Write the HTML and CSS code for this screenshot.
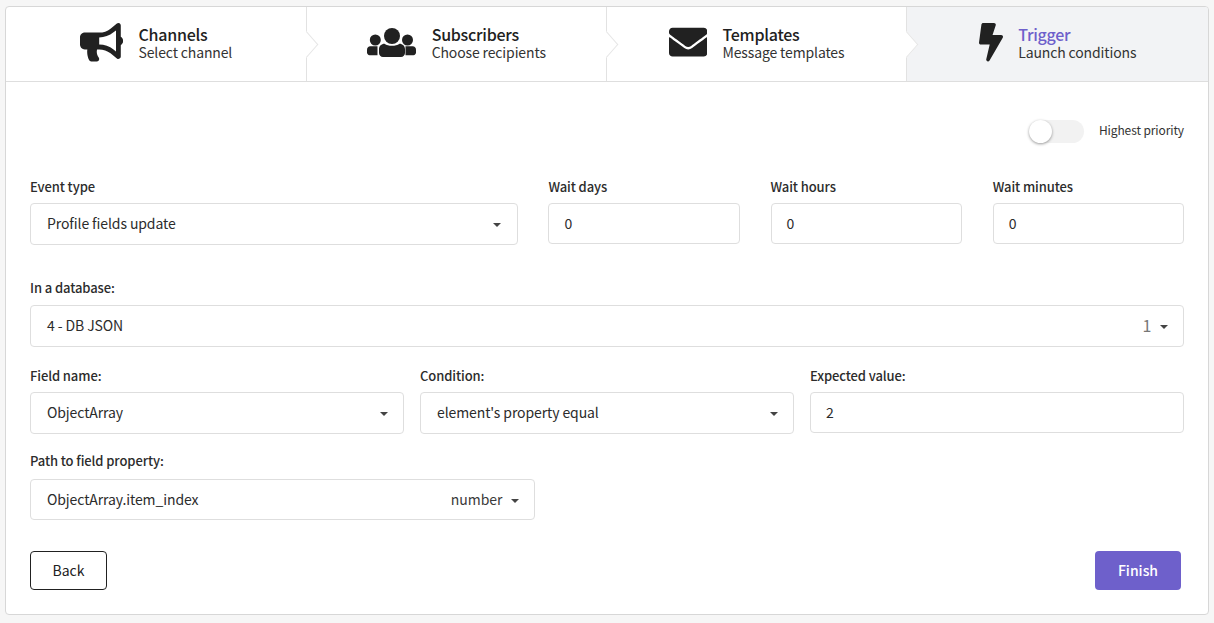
FILE: index.html
```html
<!DOCTYPE html>
<html lang="en">
<head>
<meta charset="utf-8">
<title>Trigger</title>
<link rel="stylesheet" href="styles.css">
</head>
<body>
<main class="card">
  <nav class="steps">
    <div class="step">
      <svg class="icon icon-bullhorn" viewBox="0 0 576 512"><path d="M576 240c0-23.630-12.950-44.040-32-55.120V32.010C544 23.260 537.020 0 512 0c-7.120 0-14.190 2.380-19.980 7.020l-85.030 68.030C364.280 109.190 310.660 128 256 128H64c-35.350 0-64 28.650-64 64v96c0 35.350 28.650 64 64 64h33.700c-1.390 10.480-2.180 21.140-2.180 32 0 39.770 9.260 77.350 25.560 110.940 5.190 10.690 16.520 17.060 28.400 17.060h74.280c26.050 0 41.690-29.840 25.900-50.560-16.400-21.520-26.150-48.360-26.150-77.440 0-11.110 1.620-21.790 4.410-32H256c54.660 0 108.280 18.810 150.980 52.950l85.030 68.030a32.023 32.023 0 0 0 19.980 7.020c24.920 0 32-22.780 32-32V295.130C563.050 284.040 576 263.630 576 240zm-96 141.420l-33.050-26.440C392.950 311.780 325.120 288 256 288v-96c69.120 0 136.950-23.780 190.950-66.980L480 98.580v282.840z"/></svg>
      <div class="step-text"><div class="step-title">Channels</div><div class="step-sub">Select channel</div></div>
    </div>
    <div class="step">
      <svg class="icon icon-users" viewBox="0 0 49 29"><circle cx="25" cy="8" r="8"/><circle cx="8.300" cy="12" r="5.500"/><circle cx="40.500" cy="12" r="5.500"/><path d="M12 25v-4c0-3 2.500-5.300 5.500-5.300 2 1.300 4.500 2.100 7.500 2.100s5.500-.8 7.500-2.100c3 0 5.500 2.300 5.500 5.300v4c0 2.200-1.800 4-4 4H16c-2.200 0-4-1.800-4-4z"/><path d="M0 21.500c0-1.800 1.500-3.300 3.300-3.300h7.200v9H2.500C1.100 27.200 0 26 0 24.600z"/><path d="M49 21.500c0-1.800-1.500-3.300-3.300-3.300h-7.200v9h8C47.900 27.200 49 26 49 24.600z"/></svg>
      <div class="step-text"><div class="step-title">Subscribers</div><div class="step-sub">Choose recipients</div></div>
    </div>
    <div class="step">
      <svg class="icon icon-envelope" viewBox="0 0 512 512"><path d="M502.300 190.800c3.900-3.100 9.700-.2 9.700 4.700V400c0 26.500-21.500 48-48 48H48c-26.500 0-48-21.500-48-48V195.600c0-5 5.700-7.800 9.700-4.700 22.400 17.400 52.100 39.500 154.100 113.600 21.100 15.400 56.700 47.800 92.200 47.600 35.700.3 72-32.800 92.300-47.600 102-74.100 131.600-96.300 154-113.700zM256 320c23.200.4 56.600-29.200 73.400-41.400 132.700-96.300 142.800-104.700 173.400-128.700 5.800-4.500 9.200-11.500 9.200-18.900v-19c0-26.500-21.500-48-48-48H48C21.500 64 0 85.500 0 112v19c0 7.400 3.400 14.300 9.200 18.900 30.600 23.900 40.700 32.400 173.400 128.700 16.800 12.200 50.200 41.800 73.400 41.400z"/></svg>
      <div class="step-text"><div class="step-title">Templates</div><div class="step-sub">Message templates</div></div>
    </div>
    <div class="step step-active">
      <svg class="icon icon-bolt" viewBox="0 0 320 512"><path d="M296 160H180.600l42.600-129.800C227.200 15 215.700 0 200 0H56C44 0 33.800 8.900 32.200 20.800l-32 240C-1.700 275.200 9.500 288 24 288h118.700L96.600 482.500c-3.600 15.200 8 29.500 23.300 29.500 8.400 0 16.400-4.400 20.800-12l176-304c9.300-15.900-2.200-36-20.700-36z"/></svg>
      <div class="step-text"><div class="step-title">Trigger</div><div class="step-sub">Launch conditions</div></div>
    </div>
  </nav>
  <form class="body">
    <div class="priority">
      <span class="toggle"><span class="knob"></span></span>
      <span class="priority-label">Highest priority</span>
    </div>
    <div class="grid grid-top">
      <div class="field"><div class="label">Event type</div><div class="control"><span class="value">Profile fields update</span><span class="caret"></span></div></div>
      <div class="field"><div class="label">Wait days</div><div class="control input">0</div></div>
      <div class="field"><div class="label">Wait hours</div><div class="control input">0</div></div>
      <div class="field"><div class="label">Wait minutes</div><div class="control input">0</div></div>
    </div>
    <div class="field field-db"><div class="label">In a database:</div><div class="control"><span class="value">4 - DB JSON</span><span class="meta meta-num">1</span><span class="caret"></span></div></div>
    <div class="grid grid-three">
      <div class="field"><div class="label">Field name:</div><div class="control"><span class="value">ObjectArray</span><span class="caret"></span></div></div>
      <div class="field"><div class="label">Condition:</div><div class="control"><span class="value">element's property equal</span><span class="caret"></span></div></div>
      <div class="field"><div class="label">Expected value:</div><div class="control input">2</div></div>
    </div>
    <div class="field field-path"><div class="label">Path to field property:</div><div class="control"><span class="value">ObjectArray.item_index</span><span class="meta">number</span><span class="caret"></span></div></div>
    <div class="actions">
      <button type="button" class="btn btn-back">Back</button>
      <button type="button" class="btn btn-finish">Finish</button>
    </div>
  </form>
</main>
</body>
</html>
```
FILE: styles.css
```css
* { box-sizing: border-box; }
html, body { height: 100%; }
body {
  margin: 0;
  padding: 6px 5px 8px;
  background: #f6f6f6;
  color: #212121;
  font-family: "Noto Sans CJK JP", "Noto Sans", sans-serif;
  font-size: 14px;
  line-height: 20px;
  letter-spacing: -.1px;
  overflow: hidden;
}
.card {
  background: #fff;
  border: 1px solid #d7d7d7;
  border-radius: 4px;
  height: 609px;
}
.steps { display: flex; height: 75px; border-bottom: 1px solid #dedede; }
.step {
  position: relative;
  flex: 0 0 300px;
  display: flex;
  align-items: center;
  justify-content: center;
  gap: 15.5px;
  padding-bottom: 2px;
  border-right: 1px solid #e2e2e2;
}
.step:first-child { flex-basis: 301px; }
.step:last-child { flex: 1; border-right: 0; }
.step:not(:last-child)::after {
  content: "";
  position: absolute;
  top: 28px;
  right: -9.5px;
  width: 18px;
  height: 18px;
  transform: scaleX(.88) rotate(45deg);
  background: #fff;
  border-top: 1px solid #e6e6e6;
  border-right: 1px solid #e6e6e6;
  z-index: 1;
}
.step-active { background: #f2f3f5; border-top-right-radius: 3px; }
.step-active .step-title { color: #6e60cb; }
.icon { display: block; fill: #212121; flex: none; margin-bottom: 1px; }
.icon-bullhorn { width: 43.2px; height: 38.4px; }
.icon-users { width: 49px; height: 29px; }
.icon-envelope { width: 38.4px; height: 38.4px; }
.icon-bolt { width: 24px; height: 38.4px; }
.step-title { font-size: 16px; line-height: 19px; font-weight: 500; letter-spacing: -.25px; }
.step-sub { font-size: 14px; line-height: 17px; color: #333; letter-spacing: -.13px; }
.body { padding: 38px 24px 0; }
.priority { display: flex; justify-content: flex-end; align-items: center; gap: 15px; height: 23px; }
.toggle { position: relative; display: block; width: 55px; height: 23px; border-radius: 12px; background: #f2f2f2; }
.knob {
  position: absolute;
  left: 0;
  top: 0;
  width: 23px;
  height: 23px;
  border-radius: 50%;
  background: #fff;
  box-shadow: 0 1px 3px rgba(0,0,0,.4);
}
.priority-label { font-size: 12px; color: #333; letter-spacing: -.1px; margin-bottom: 4px; }
.label { font-size: 13px; line-height: 18px; font-weight: 500; color: #2c2c2c; margin-bottom: 7px; }
.control {
  display: flex;
  align-items: center;
  height: 42px;
  padding: 0 15.5px 2px 16px;
  border: 1px solid #dedede;
  border-radius: 4px;
  color: #2c2c2c;
}
.input { height: 41px; padding: 0 15px 1px; }
.value { flex: 1; white-space: nowrap; }
.meta { color: #3a3a3a; margin-right: 8px; letter-spacing: 0; }
.meta-num { color: #777; font-size: 16px; }
.caret { width: 0; height: 0; margin-top: 4px; border-left: 4.5px solid transparent; border-right: 4.5px solid transparent; border-top: 4.5px solid #444; flex: none; }
.grid { display: grid; }
.grid-top { grid-template-columns: 487.5px repeat(3, 1fr); column-gap: 30.9px; margin-top: 35px; }
.field-db { margin-top: 34px; }
.field-db .label { margin-bottom: 8px; }
.grid-three { grid-template-columns: repeat(3, 1fr); column-gap: 16px; margin-top: 20px; }
.field-path { width: 505px; margin-top: 18px; }
.field-path .label { margin-bottom: 9px; }
.field-path .control { height: 41px; }
.actions { display: flex; justify-content: space-between; align-items: center; padding-right: 3px; margin-top: 31px; }
.btn { height: 39px; padding: 0 0 2px; border-radius: 4px; font: inherit; cursor: pointer; }
.btn-back { width: 77px; background: #fff; border: 1px solid #212121; color: #212121; }
.btn-finish { width: 86px; background: #6e60cb; border: 0; color: #fff; font-weight: 500; }
```
